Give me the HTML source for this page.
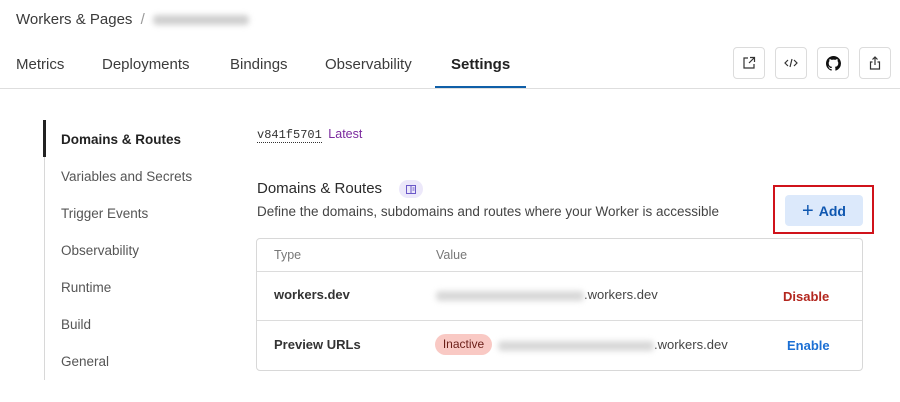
<!DOCTYPE html>
<html><head><meta charset="utf-8"><style>
*{box-sizing:border-box;margin:0;padding:0}
body{width:900px;height:402px;background:#fff;font-family:"Liberation Sans",sans-serif;color:#313131;position:relative;overflow:hidden}
.a{position:absolute;white-space:nowrap}
.blur{display:inline-block;background:#cfcfcf;filter:blur(3px);border-radius:4px;height:10px;vertical-align:middle}
.tab{font-size:15px;color:#3c3c3c;top:56px}
.btn{position:absolute;top:47px;width:32px;height:32px;border:1px solid #dcdcdc;border-radius:4px;display:flex;align-items:center;justify-content:center}
.side{left:61px;font-size:13.5px;color:#555}
</style></head><body>
<div class="a" style="left:16px;top:11px;font-size:15px;color:#3a3a3a">Workers &amp; Pages <span style="color:#999;margin-left:4px">/</span> <span class="blur" style="width:96px;margin-left:4px"></span></div>
<div class="a tab" style="left:16px">Metrics</div>
<div class="a tab" style="left:102px">Deployments</div>
<div class="a tab" style="left:230px">Bindings</div>
<div class="a tab" style="left:325px">Observability</div>
<div class="a tab" style="left:451px;font-weight:bold;color:#222">Settings</div>
<div class="a" style="left:435px;top:86px;width:91px;height:2px;background:#0f5fa8"></div>
<div class="a" style="left:0;top:88px;width:900px;height:1px;background:#dedede"></div>
<div class="btn" style="left:733px"><svg width="14" height="14" viewBox="0 0 14 14" fill="none" stroke="#333" stroke-width="1.2"><path d="M6 2H2v10h10V8"/><path d="M8 1.5h4.5V6M12.5 1.5L7 7"/></svg></div>
<div class="btn" style="left:775px"><svg width="14" height="14" viewBox="0 0 14 14" fill="none" stroke="#333" stroke-width="1.2"><path d="M4 4L1 7l3 3M10 4l3 3-3 3M8 3L6 11"/></svg></div>
<div class="btn" style="left:817px"><svg width="15" height="15" viewBox="0 0 16 16"><path fill="#111" d="M8 0C3.580 0 0 3.58 0 8c0 3.54 2.29 6.530 5.470 7.590.4.07.55-.17.55-.38v-1.33c-2.23.48-2.7-1.07-2.7-1.07-.36-.92-.89-1.17-.89-1.17-.73-.5.06-.49.06-.49.8.06 1.23.83 1.23.83.72 1.22 1.87.87 2.33.66.07-.52.28-.87.51-1.07-1.78-.2-3.65-.89-3.65-3.95 0-.87.31-1.59.82-2.15-.08-.2-.36-1.02.08-2.12 0 0 .67-.21 2.2.82A7.7 7.7 0 018 3.87c.68 0 1.36.09 2 .27 1.53-1.04 2.2-.82 2.2-.82.44 1.1.16 1.92.08 2.12.51.56.82 1.28.82 2.15 0 3.07-1.87 3.75-3.65 3.95.29.25.54.73.54 1.48v2.2c0 .21.15.46.55.38A8 8 0 0016 8c0-4.42-3.58-8-8-8z"/></svg></div>
<div class="btn" style="left:859px"><svg width="14" height="14" viewBox="0 0 14 14" fill="none" stroke="#333" stroke-width="1.2"><path d="M4.5 6H2.5v7h9V6h-2M7 9V1M4.5 3.5L7 1l2.5 2.5"/></svg></div>

<div class="a" style="left:44px;top:120px;width:1px;height:260px;background:#d8d8d8"></div>
<div class="a" style="left:43px;top:120px;width:3px;height:37px;background:#222"></div>
<div class="a side" style="top:132px;font-weight:bold;color:#222">Domains &amp; Routes</div>
<div class="a side" style="top:169px">Variables and Secrets</div>
<div class="a side" style="top:206px">Trigger Events</div>
<div class="a side" style="top:243px">Observability</div>
<div class="a side" style="top:280px">Runtime</div>
<div class="a side" style="top:317px">Build</div>
<div class="a side" style="top:354px">General</div>

<div class="a" style="left:257px;top:127px;font-size:12.5px"><span style="font-family:'Liberation Mono',monospace;font-size:12px;color:#333;border-bottom:1px dotted #333">v841f5701</span> <span style="color:#7b2a9e;margin-left:3px">Latest</span></div>
<div class="a" style="left:257px;top:180px;font-size:15px;color:#2a2a2a">Domains &amp; Routes</div>
<div class="a" style="left:399px;top:180px;width:24px;height:18px;border-radius:9px;background:#ece8fa;display:flex;align-items:center;justify-content:center"><svg width="10" height="9" viewBox="0 0 10 9" fill="none" stroke="#6a57c8" stroke-width="1"><rect x="0.5" y="0.5" width="9" height="8"/><path d="M5 0.5v8M6.5 3h2M6.5 5h2"/></svg></div>
<div class="a" style="left:257px;top:204px;font-size:13.5px;color:#444">Define the domains, subdomains and routes where your Worker is accessible</div>
<div class="a" style="left:773px;top:185px;width:101px;height:49px;border:2px solid #d0131b"></div>
<div class="a" style="left:785px;top:195px;width:78px;height:31px;border-radius:4px;background:#dce9fb;color:#0f57b0;font-size:14px;font-weight:bold;display:flex;align-items:center;justify-content:center"><span style="font-weight:normal;font-size:20px;margin-right:5px;line-height:1">+</span>Add</div>

<div class="a" style="left:256px;top:238px;width:607px;height:133px;border:1px solid #d8d8d8;border-radius:4px"></div>
<div class="a" style="left:257px;top:271px;width:605px;height:1px;background:#dcdcdc"></div>
<div class="a" style="left:257px;top:320px;width:605px;height:1px;background:#dcdcdc"></div>
<div class="a" style="left:274px;top:248px;font-size:12.5px;color:#777">Type</div>
<div class="a" style="left:436px;top:248px;font-size:12.5px;color:#777">Value</div>
<div class="a" style="left:274px;top:287px;font-size:13px;font-weight:bold;color:#333">workers.dev</div>
<div class="a" style="left:436px;top:287px;font-size:13px;color:#444"><span class="blur" style="width:148px;background:#d8d8d8"></span>.workers.dev</div>
<div class="a" style="left:783px;top:289px;font-size:13px;font-weight:bold;color:#b3261e">Disable</div>
<div class="a" style="left:274px;top:337px;font-size:13px;font-weight:bold;color:#333">Preview URLs</div>
<div class="a" style="left:435px;top:334px;width:57px;height:21px;border-radius:11px;background:#f9c9c4;color:#6b1f18;font-size:12px;line-height:21px;text-align:center">Inactive</div>
<div class="a" style="left:498px;top:337px;font-size:13px;color:#444"><span class="blur" style="width:156px;background:#d8d8d8"></span>.workers.dev</div>
<div class="a" style="left:787px;top:338px;font-size:13px;font-weight:bold;color:#1b6fd4">Enable</div>
</body></html>
